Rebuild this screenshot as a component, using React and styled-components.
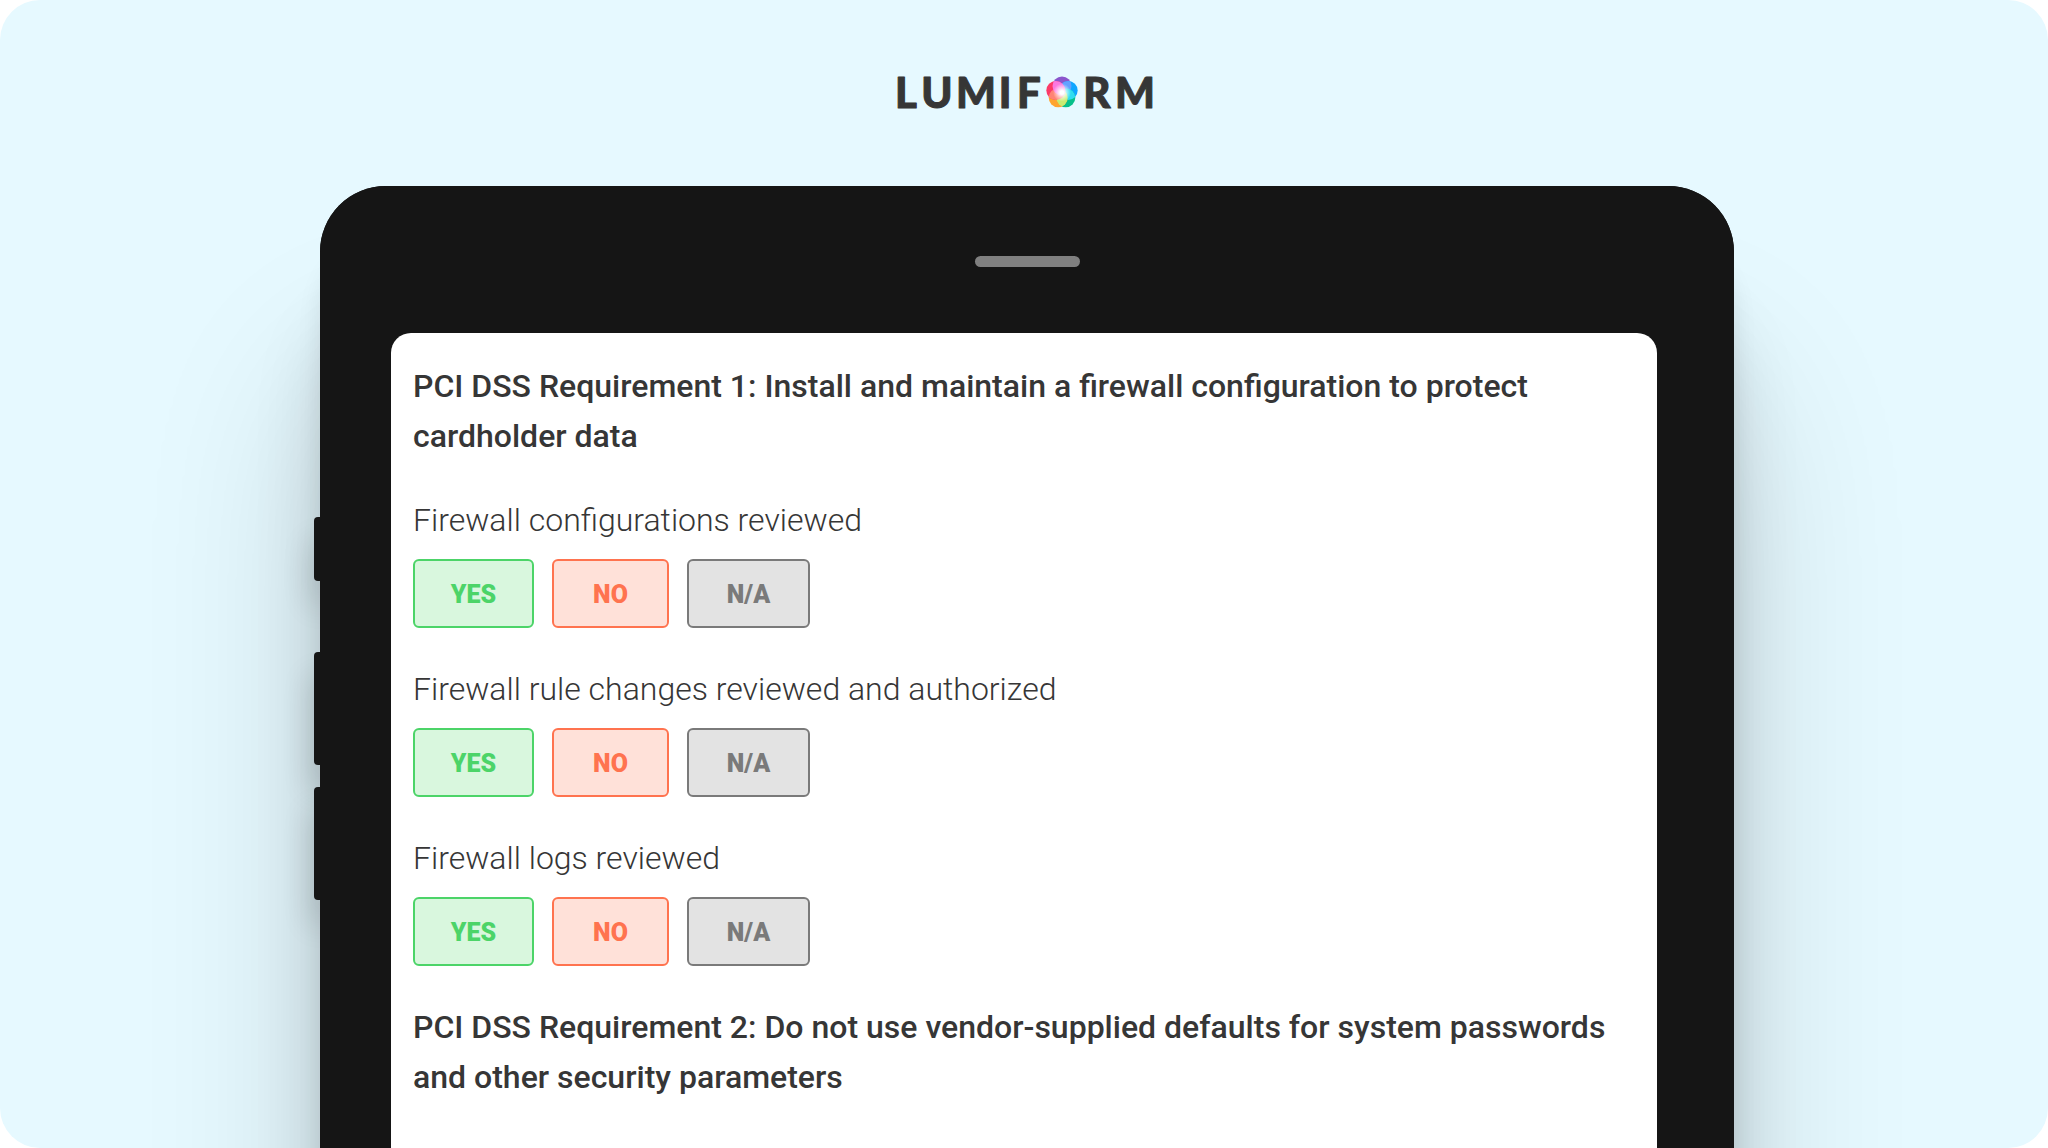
import React from 'react';
import styled, { createGlobalStyle } from 'styled-components';

const GlobalStyle = createGlobalStyle`
  * {
    box-sizing: border-box;
  }

  body {
    margin: 0;
    background: #ffffff;
    font-family: Roboto, "Liberation Sans", sans-serif;
    color: #363636;
  }
`;

const Page = styled.main`
  height: 100vh;
  overflow: hidden;
  display: flex;
  flex-direction: column;
  background: #e6f9ff;
  border-radius: 40px;
`;

const Header = styled.header`
  flex-shrink: 0;
  height: 186px;
  padding-top: 72px;
  display: flex;
  justify-content: center;
`;

const LogoImage = styled.svg`
  width: 260px;
  height: 40px;
  overflow: visible;
`;

const LogoText = styled.text`
  font-family: Lato, sans-serif;
  font-size: 42px;
  font-weight: 900;
  text-anchor: middle;
  fill: #363636;
  stroke: #363636;
  stroke-width: 1;
  stroke-linejoin: round;
`;

const Stage = styled.div`
  flex: 1 0 auto;
  display: grid;
  grid-template-columns: 320fr 1414fr 314fr;
`;

const Tablet = styled.section`
  grid-column: 2;
  position: relative;
  min-width: 0;
  min-height: 1200px;
  display: flex;
  flex-direction: column;
  background: #151515;
  border-radius: 66px 66px 0 0;
  box-shadow:
    0 60px 24px rgba(0, 0, 0, 0.08),
    0 130px 70px rgba(0, 0, 0, 0.12),
    0 190px 180px rgba(0, 0, 0, 0.16);
`;

const SideKey = styled.span`
  position: absolute;
  left: -6px;
  top: ${(props) => props.$top}px;
  width: 12px;
  height: ${(props) => props.$height}px;
  background: #151515;
  border-radius: 4px;
  box-shadow: 0 24px 30px rgba(0, 0, 0, 0.24);
`;

/* covers the part of the key shadows that would fall on the frame */
const Bezel = styled.div`
  position: absolute;
  inset: 0;
  background: #151515;
  border-radius: inherit;
`;

const Speaker = styled.div`
  position: relative;
  align-self: center;
  width: 105px;
  height: 11px;
  margin: 70px 0 66px;
  background: #808080;
  border-radius: 6px;
`;

const Screen = styled.div`
  position: relative;
  flex: 1;
  margin: 0 77px 0 71px;
  padding: 28px 22px 0;
  background: #ffffff;
  border-radius: 20px 20px 0 0;
`;

const SectionTitle = styled.h2`
  margin: 0;
  font-size: 32px;
  font-weight: 500;
  line-height: 50px;
`;

const Questions = styled.div`
  display: flex;
  flex-direction: column;
  gap: 36px;
  padding: 34px 0 36px;
`;

const Question = styled.fieldset`
  margin: 0;
  padding: 0;
  border: 0;
  min-width: 0;
`;

const QuestionLabel = styled.legend`
  padding: 0;
  margin-bottom: 14px;
  font-size: 32px;
  font-weight: 300;
  line-height: 50px;
`;

const Answers = styled.div`
  display: flex;
  gap: 18px;
`;

const AnswerButton = styled.button`
  width: ${(props) => props.$width}px;
  height: 69px;
  padding: 2px 0 0;
  font-family: inherit;
  font-size: 25px;
  font-weight: 900;
  color: ${(props) => props.$color};
  background: ${(props) => props.$background};
  border: 2px solid ${(props) => props.$color};
  border-radius: 6px;
  cursor: pointer;
`;

const answers = [
  { label: 'YES', color: '#4cd468', background: '#d9f7de', width: 121 },
  { label: 'NO', color: '#ff734f', background: '#ffe1d9', width: 117 },
  { label: 'N/A', color: '#7a7a7a', background: '#e3e3e3', width: 123 },
];

const firewallQuestions = [
  'Firewall configurations reviewed',
  'Firewall rule changes reviewed and authorized',
  'Firewall logs reviewed',
];

// each petal with the colour of its overlap with the next one, clockwise from the top
const petals = [
  { fill: '#8a55cc', overlap: '#62a0ff' },
  { fill: '#0fa6ff', overlap: '#2fdcf0' },
  { fill: '#05c08a', overlap: '#c6ec72' },
  { fill: '#ffa42e', overlap: '#ff8375' },
  { fill: '#fb3a68', overlap: '#fb78e0' },
].map((petal, i) => {
  const angle = ((i * 72 - 90) * Math.PI) / 180;
  return {
    ...petal,
    cx: 168 + Math.cos(angle) * 6.5,
    cy: 20.5 + Math.sin(angle) * 6.5,
  };
});

function Logo() {
  return (
    <LogoImage viewBox="0 0 260 40" role="img" aria-label="Lumiform">
      <defs>
        {petals.map((petal, i) => (
          <clipPath key={petal.fill} id={`petal-${i}`}>
            <circle cx={petal.cx} cy={petal.cy} r="9.5" />
          </clipPath>
        ))}
        <radialGradient id="glow">
          <stop offset="0.2" stopColor="#ffffff" />
          <stop offset="1" stopColor="#ffffff" stopOpacity="0" />
        </radialGradient>
      </defs>
      <LogoText x="12 43 82 111 135" y="36">LUMIF</LogoText>
      {petals.map((petal) => (
        <circle key={petal.fill} cx={petal.cx} cy={petal.cy} r="9.5" fill={petal.fill} />
      ))}
      {petals.map((petal, i) => {
        const next = (i + 1) % petals.length;
        return (
          <circle
            key={petal.overlap}
            cx={petal.cx}
            cy={petal.cy}
            r="9.5"
            fill={petal.overlap}
            clipPath={`url(#petal-${next})`}
          />
        );
      })}
      <circle cx="168" cy="20.5" r="9" fill="url(#glow)" />
      <LogoText x="203 241" y="36">RM</LogoText>
    </LogoImage>
  );
}

function AnswerGroup({ label }) {
  return (
    <Question>
      <QuestionLabel>{label}</QuestionLabel>
      <Answers>
        {answers.map((answer) => (
          <AnswerButton
            key={answer.label}
            type="button"
            $color={answer.color}
            $background={answer.background}
            $width={answer.width}
          >
            {answer.label}
          </AnswerButton>
        ))}
      </Answers>
    </Question>
  );
}

function App() {
  return (
    <>
      <GlobalStyle />
      <Page>
        <Header>
          <Logo />
        </Header>
        <Stage>
          <Tablet>
            <SideKey $top={331} $height={64} />
            <SideKey $top={466} $height={113} />
            <SideKey $top={601} $height={113} />
            <Bezel />
            <Speaker />
            <Screen>
              <SectionTitle>
                PCI DSS Requirement 1: Install and maintain a firewall configuration to protect cardholder data
              </SectionTitle>
              <Questions>
                {firewallQuestions.map((question) => (
                  <AnswerGroup key={question} label={question} />
                ))}
              </Questions>
              <SectionTitle>
                PCI DSS Requirement 2: Do not use vendor-supplied defaults for system passwords and other security parameters
              </SectionTitle>
            </Screen>
          </Tablet>
        </Stage>
      </Page>
    </>
  );
}

export default App;
